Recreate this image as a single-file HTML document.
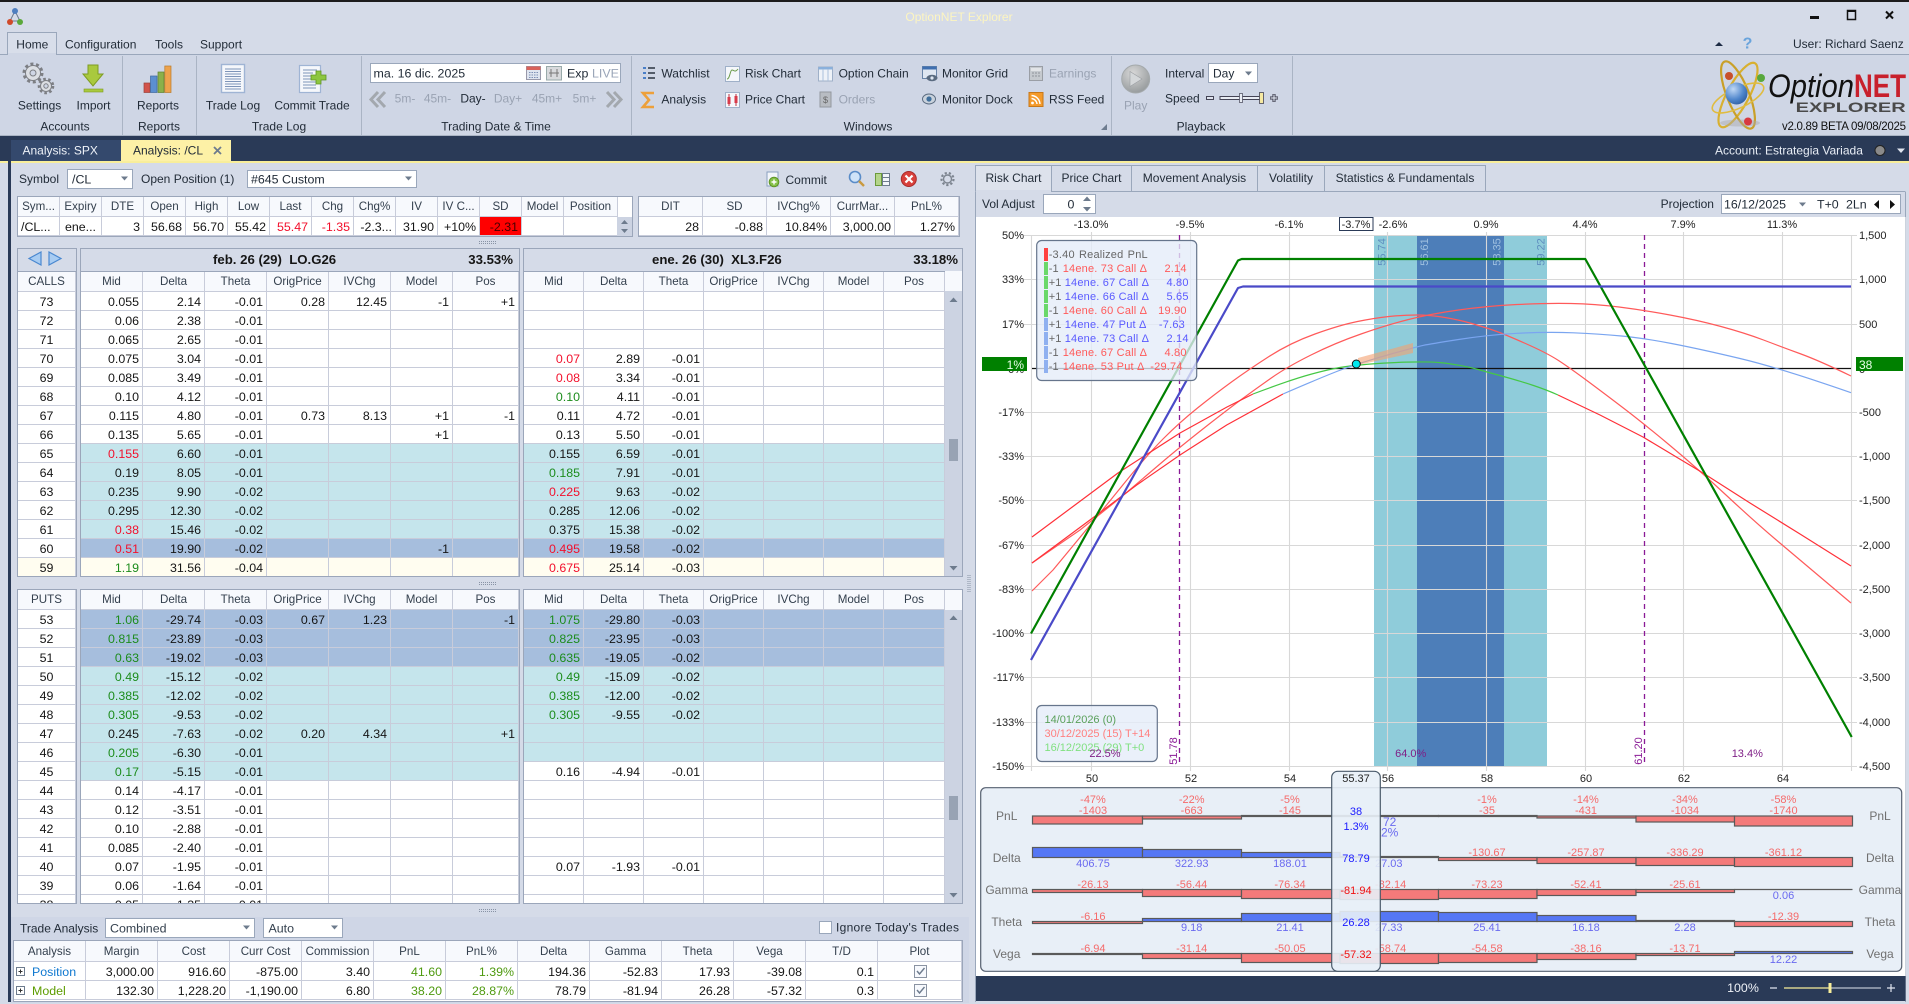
<!DOCTYPE html>
<html><head><meta charset="utf-8"><title>OptionNET Explorer</title>
<style>
html,body{margin:0;padding:0;width:1909px;height:1004px;overflow:hidden;background:#d5dbe8;font-family:"Liberation Sans",sans-serif}
body{filter:blur(.3px)}
div.p{position:absolute}
.t{position:absolute;box-sizing:border-box;border:1px solid #9ba6ba;overflow:hidden;background:#fff}
table{border-collapse:separate;border-spacing:0;table-layout:fixed}
td,th{box-sizing:border-box;height:19px;padding:1px 3px 0 0;border-right:1px solid #c8ccda;border-bottom:1px solid #c8ccda;font:12.4px "Liberation Sans",sans-serif;color:#151515;text-align:right;white-space:nowrap;overflow:hidden}
th{font-weight:normal;font-size:11.6px;text-align:center;background:#f7f9fd;height:20px;color:#34404e;padding:0}
td.s{text-align:center;padding:1px 0 0 0}
td.r{color:#f2102c}td.g{color:#1c8c1c}td.o{color:#4f9a10}
tr.a td{background:#c5e5ec}tr.b td{background:#a6bedd}tr.c td{background:#fffdf0}
.ti{height:22px;background:#d5dbe8;border-bottom:1px solid #9ba6ba;position:relative}
svg{position:absolute;left:0;top:0}
svg text{font-family:"Liberation Sans",sans-serif;font-size:12px;fill:#222c38;dominant-baseline:central}
.m{text-anchor:middle}.e{text-anchor:end}
.d{fill:#9aa3b3}
.c{font-size:11px;fill:#222}
.lr{font-size:11px;fill:#f56a6a}.lb{font-size:11px;fill:#6a6af0}
svg text.lg{font-size:11px;letter-spacing:.2px}
svg text.l2{font-size:11px}
.pl{font-size:12px;fill:#707070}
</style></head><body>
<div class="p" style="left:0;top:0;width:1909px;height:2px;background:#1c1c1c"></div>
<div class="p" style="left:0;top:54px;width:1909px;height:82px;background:#cfd6e5"></div>
<div class="p" style="left:0;top:135px;width:1909px;height:27px;background:#2a3a57"></div>
<div class="p" style="left:0;top:161px;width:1909px;height:2px;background:#f8ee9a"></div>
<div class="p" style="left:8px;top:136px;width:3px;height:866px;background:#2a3a57"></div>
<div class="p" style="left:11px;top:163px;width:964px;height:840px;background:#d5dbe8"></div>
<div class="p" style="left:11px;top:917px;width:958px;height:86px;background:#cfd6e6"></div>
<div class="p" style="left:120px;top:140px;width:111px;height:21px;background:#fdf1a6"></div>
<div class="p" style="left:11px;top:140px;width:110px;height:21px;background:#34496d"></div>

<!-- Info tables -->
<div class="t" style="left:17px;top:196px;width:616px;height:41px">
<table style="width:600px"><colgroup><col span="13" style="width:42px"><col style="width:54px"></colgroup>
<tr><th>Sym...<th>Expiry<th>DTE<th>Open<th>High<th>Low<th>Last<th>Chg<th>Chg%<th>IV<th>IV C...<th>SD<th>Model<th>Position</tr>
<tr><td style="text-align:left;padding-left:3px">/CL...<td class="s">ene...<td>3<td>56.68<td>56.70<td>55.42<td class="r">55.47<td class="r">-1.35<td>-2.3...<td>31.90<td>+10%<td style="background:#f00;color:#400">-2.31<td><td></tr>
</table></div>
<div class="t" style="left:638px;top:196px;width:322px;height:41px">
<table style="width:320px"><colgroup><col span="5" style="width:64px"></colgroup>
<tr><th>DIT<th>SD<th>IVChg%<th>CurrMar...<th>PnL%</tr>
<tr><td>28<td>-0.88<td>10.84%<td>3,000.00<td>1.27%</tr>
</table></div>

<!-- Calls strikes -->
<div class="t" style="left:17px;top:248px;width:60px;height:329px">
<div class="ti"></div>
<table style="width:58px"><col style="width:58px">
<tr><th>CALLS</tr>
<tr><td class="s">73<tr><td class="s">72<tr><td class="s">71<tr><td class="s">70<tr><td class="s">69<tr><td class="s">68<tr><td class="s">67<tr><td class="s">66<tr><td class="s">65<tr><td class="s">64<tr><td class="s">63<tr><td class="s">62<tr><td class="s">61<tr><td class="s">60<tr class="c"><td class="s">59
</table></div>

<!-- Calls left -->
<div class="t" style="left:80px;top:248px;width:440px;height:329px">
<div class="ti" style="font:bold 13.2px 'Liberation Sans',sans-serif;line-height:21px;color:#151515"><span style="position:absolute;left:132px;white-space:pre">feb. 26 (29)  LO.G26</span><span style="position:absolute;right:6px">33.53%</span></div>
<table style="width:438px"><colgroup><col span="6" style="width:62px"><col style="width:66px"></colgroup>
<tr><th>Mid<th>Delta<th>Theta<th>OrigPrice<th>IVChg<th>Model<th>Pos</tr>
<tr><td>0.055<td>2.14<td>-0.01<td>0.28<td>12.45<td>-1<td>+1</tr>
<tr><td>0.06<td>2.38<td>-0.01<td><td><td><td></tr>
<tr><td>0.065<td>2.65<td>-0.01<td><td><td><td></tr>
<tr><td>0.075<td>3.04<td>-0.01<td><td><td><td></tr>
<tr><td>0.085<td>3.49<td>-0.01<td><td><td><td></tr>
<tr><td>0.10<td>4.12<td>-0.01<td><td><td><td></tr>
<tr><td>0.115<td>4.80<td>-0.01<td>0.73<td>8.13<td>+1<td>-1</tr>
<tr><td>0.135<td>5.65<td>-0.01<td><td><td>+1<td></tr>
<tr class="a"><td class="r">0.155<td>6.60<td>-0.01<td><td><td><td></tr>
<tr class="a"><td>0.19<td>8.05<td>-0.01<td><td><td><td></tr>
<tr class="a"><td>0.235<td>9.90<td>-0.02<td><td><td><td></tr>
<tr class="a"><td>0.295<td>12.30<td>-0.02<td><td><td><td></tr>
<tr class="a"><td class="r">0.38<td>15.46<td>-0.02<td><td><td><td></tr>
<tr class="b"><td class="r">0.51<td>19.90<td>-0.02<td><td><td>-1<td></tr>
<tr class="c"><td class="g">1.19<td>31.56<td>-0.04<td><td><td><td></tr>
</table></div>

<!-- Calls right -->
<div class="t" style="left:523px;top:248px;width:440px;height:329px;background:#ccd3e2">
<div class="ti" style="font:bold 13.2px 'Liberation Sans',sans-serif;line-height:21px;color:#151515"><span style="position:absolute;left:128px;white-space:pre">ene. 26 (30)  XL3.F26</span><span style="position:absolute;right:4px">33.18%</span></div>
<table style="width:421px;background:#fff"><colgroup><col span="6" style="width:60px"><col style="width:61px"></colgroup>
<tr><th>Mid<th>Delta<th>Theta<th>OrigPrice<th>IVChg<th>Model<th>Pos</tr>
<tr><td><td><td><td><td><td><td></tr>
<tr><td><td><td><td><td><td><td></tr>
<tr><td><td><td><td><td><td><td></tr>
<tr><td class="r">0.07<td>2.89<td>-0.01<td><td><td><td></tr>
<tr><td class="r">0.08<td>3.34<td>-0.01<td><td><td><td></tr>
<tr><td class="g">0.10<td>4.11<td>-0.01<td><td><td><td></tr>
<tr><td>0.11<td>4.72<td>-0.01<td><td><td><td></tr>
<tr><td>0.13<td>5.50<td>-0.01<td><td><td><td></tr>
<tr class="a"><td>0.155<td>6.59<td>-0.01<td><td><td><td></tr>
<tr class="a"><td class="g">0.185<td>7.91<td>-0.01<td><td><td><td></tr>
<tr class="a"><td class="r">0.225<td>9.63<td>-0.02<td><td><td><td></tr>
<tr class="a"><td>0.285<td>12.06<td>-0.02<td><td><td><td></tr>
<tr class="a"><td>0.375<td>15.38<td>-0.02<td><td><td><td></tr>
<tr class="b"><td class="r">0.495<td>19.58<td>-0.02<td><td><td><td></tr>
<tr class="c"><td class="r">0.675<td>25.14<td>-0.03<td><td><td><td></tr>
</table>
</div>
<div class="p" style="left:945px;top:271px;width:17px;height:20px;background:#f7f9fd"></div>

<!-- Puts strikes -->
<div class="t" style="left:17px;top:589px;width:60px;height:315px">
<table style="width:58px"><col style="width:58px">
<tr><th>PUTS</tr>
<tr><td class="s">53<tr><td class="s">52<tr><td class="s">51<tr><td class="s">50<tr><td class="s">49<tr><td class="s">48<tr><td class="s">47<tr><td class="s">46<tr><td class="s">45<tr><td class="s">44<tr><td class="s">43<tr><td class="s">42<tr><td class="s">41<tr><td class="s">40<tr><td class="s">39<tr><td class="s">38
</table></div>

<!-- Puts left -->
<div class="t" style="left:80px;top:589px;width:440px;height:315px">
<table style="width:438px"><colgroup><col span="6" style="width:62px"><col style="width:66px"></colgroup>
<tr><th>Mid<th>Delta<th>Theta<th>OrigPrice<th>IVChg<th>Model<th>Pos</tr>
<tr class="b"><td class="g">1.06<td>-29.74<td>-0.03<td>0.67<td>1.23<td><td>-1</tr>
<tr class="b"><td class="g">0.815<td>-23.89<td>-0.03<td><td><td><td></tr>
<tr class="b"><td class="g">0.63<td>-19.02<td>-0.03<td><td><td><td></tr>
<tr class="a"><td class="g">0.49<td>-15.12<td>-0.02<td><td><td><td></tr>
<tr class="a"><td class="g">0.385<td>-12.02<td>-0.02<td><td><td><td></tr>
<tr class="a"><td class="g">0.305<td>-9.53<td>-0.02<td><td><td><td></tr>
<tr class="a"><td>0.245<td>-7.63<td>-0.02<td>0.20<td>4.34<td><td>+1</tr>
<tr class="a"><td class="g">0.205<td>-6.30<td>-0.01<td><td><td><td></tr>
<tr class="a"><td class="g">0.17<td>-5.15<td>-0.01<td><td><td><td></tr>
<tr><td>0.14<td>-4.17<td>-0.01<td><td><td><td></tr>
<tr><td>0.12<td>-3.51<td>-0.01<td><td><td><td></tr>
<tr><td>0.10<td>-2.88<td>-0.01<td><td><td><td></tr>
<tr><td>0.085<td>-2.40<td>-0.01<td><td><td><td></tr>
<tr><td>0.07<td>-1.95<td>-0.01<td><td><td><td></tr>
<tr><td>0.06<td>-1.64<td>-0.01<td><td><td><td></tr>
<tr><td>0.05<td>-1.35<td>-0.01<td><td><td><td></tr>
</table></div>

<!-- Puts right -->
<div class="t" style="left:523px;top:589px;width:440px;height:315px;background:#ccd3e2">
<table style="width:421px;background:#fff"><colgroup><col span="6" style="width:60px"><col style="width:61px"></colgroup>
<tr><th>Mid<th>Delta<th>Theta<th>OrigPrice<th>IVChg<th>Model<th>Pos</tr>
<tr class="b"><td class="g">1.075<td>-29.80<td>-0.03<td><td><td><td></tr>
<tr class="b"><td class="g">0.825<td>-23.95<td>-0.03<td><td><td><td></tr>
<tr class="b"><td class="g">0.635<td>-19.05<td>-0.02<td><td><td><td></tr>
<tr class="a"><td class="g">0.49<td>-15.09<td>-0.02<td><td><td><td></tr>
<tr class="a"><td class="g">0.385<td>-12.00<td>-0.02<td><td><td><td></tr>
<tr class="a"><td class="g">0.305<td>-9.55<td>-0.02<td><td><td><td></tr>
<tr class="a"><td><td><td><td><td><td><td></tr>
<tr class="a"><td><td><td><td><td><td><td></tr>
<tr><td>0.16<td>-4.94<td>-0.01<td><td><td><td></tr>
<tr><td><td><td><td><td><td><td></tr>
<tr><td><td><td><td><td><td><td></tr>
<tr><td><td><td><td><td><td><td></tr>
<tr><td><td><td><td><td><td><td></tr>
<tr><td>0.07<td>-1.93<td>-0.01<td><td><td><td></tr>
<tr><td><td><td><td><td><td><td></tr>
<tr><td><td><td><td><td><td><td></tr>
</table></div>
<div class="p" style="left:945px;top:590px;width:17px;height:20px;background:#f7f9fd"></div>

<!-- Trade analysis table -->
<div class="t" style="left:13px;top:940px;width:950px;height:62px">
<table style="width:948px"><colgroup><col span="12" style="width:72px"><col style="width:84px"></colgroup>
<tr><th style="height:21px">Analysis<th style="height:21px">Margin<th style="height:21px">Cost<th style="height:21px">Curr Cost<th style="height:21px">Commission<th style="height:21px">PnL<th style="height:21px">PnL%<th style="height:21px">Delta<th style="height:21px">Gamma<th style="height:21px">Theta<th style="height:21px">Vega<th style="height:21px">T/D<th style="height:21px">Plot</tr>
<tr><td style="text-align:left;padding-left:18px;color:#0f78d0">Position<td>3,000.00<td>916.60<td>-875.00<td>3.40<td class="o">41.60<td class="o">1.39%<td>194.36<td>-52.83<td>17.93<td>-39.08<td>0.1<td></tr>
<tr><td style="text-align:left;padding-left:18px;color:#5d9c00">Model<td>132.30<td>1,228.20<td>-1,190.00<td>6.80<td class="o">38.20<td class="o">28.87%<td>78.79<td>-81.94<td>26.28<td>-57.32<td>0.3<td></tr>
</table></div>

<svg width="1909" height="1004" viewBox="0 0 1909 1004" xmlns="http://www.w3.org/2000/svg">
<defs>
<radialGradient id="sp" cx=".35" cy=".3" r=".8"><stop offset="0" stop-color="#c0d8f5"/><stop offset=".6" stop-color="#4f86cc"/><stop offset="1" stop-color="#2c5a9c"/></radialGradient>
<radialGradient id="pl" cx=".4" cy=".3" r=".8"><stop offset="0" stop-color="#d8d8d8"/><stop offset="1" stop-color="#8f9496"/></radialGradient>
</defs>
<!-- title bar -->
<g stroke="#6d7b8d" stroke-width="1" fill="none"><path d="M15 11 10 21 20 21Z"/></g>
<circle cx="15" cy="11" r="3" fill="#4f7fc0"/><circle cx="10" cy="22" r="3" fill="#d04a2a"/><circle cx="20" cy="22" r="3" fill="#5aa83a"/>
<text x="959" y="17" class="m" style="fill:#fdf5c0">OptionNET Explorer</text>
<rect x="1810" y="16" width="9" height="3" fill="#111"/>
<rect x="1847.5" y="10.5" width="8" height="9" fill="none" stroke="#111" stroke-width="1.5"/><path d="M1847 11h9" stroke="#111" stroke-width="2"/>
<path d="M1886 11.5l7 7M1893 11.5l-7 7" stroke="#111" stroke-width="2"/>
<path d="M1715 46l4-4 4 4z" fill="#1d2b44"/>
<text x="1747.5" y="44" class="m" style="font-size:16px;font-weight:bold;fill:#6aa4dc">?</text>
<text x="1793" y="44">User: Richard Saenz</text>

<!-- ribbon tabs -->
<path d="M0 54.5H1909" stroke="#9aa7bb"/>
<path d="M7.5 54.5V32.5H56.5V54.5" fill="#d8deea" stroke="#9aa7bb"/>
<rect x="8" y="53" width="48" height="3" fill="#cfd6e5"/>
<text x="16.3" y="44.5">Home</text><text x="65" y="44.5">Configuration</text><text x="155" y="44.5">Tools</text><text x="200" y="44.5">Support</text>
<path d="M122.5 56V135M196.5 56V135M361.5 56V135M631.5 56V135M1111.5 56V135M1292.5 56V135" stroke="#aab4c4"/>
<path d="M0 135.5H1909" stroke="#aab4c4"/>
<g class="m"><text x="65" y="126.5" class="m">Accounts</text><text x="159" y="126.5" class="m">Reports</text><text x="279" y="126.5" class="m">Trade Log</text><text x="496" y="126.5" class="m">Trading Date &amp; Time</text><text x="868" y="126.5" class="m">Windows</text><text x="1201" y="126.5" class="m">Playback</text>
<text x="39.6" y="105.5" class="m">Settings</text><text x="93.5" y="105.5" class="m">Import</text><text x="158" y="105.5" class="m">Reports</text><text x="233" y="105.5" class="m">Trade Log</text><text x="312" y="105.5" class="m">Commit Trade</text></g>

<!-- gears -->
<g fill="#dcdfe4" stroke="#7d7f84"><circle cx="33" cy="73" r="7.5"/><circle cx="33" cy="73" r="3" fill="#cfd6e5"/><circle cx="33" cy="73" r="9" fill="none" stroke-width="3" stroke-dasharray="3 2.65"/>
<circle cx="46" cy="86" r="5.5"/><circle cx="46" cy="86" r="2.2" fill="#cfd6e5"/><circle cx="46" cy="86" r="7" fill="none" stroke-width="2.6" stroke-dasharray="2.6 2.4"/></g>
<!-- import -->
<path d="M88 65H98V74H103L93 86 83 74H88Z" fill="#a9c93e" stroke="#7e9c22"/><rect x="84" y="89" width="19" height="3" fill="#a9c93e" stroke="#7e9c22" stroke-width=".6"/>
<!-- reports -->
<rect x="144" y="83" width="6" height="9.5" fill="#d2534a" stroke="#99413a" stroke-width=".7"/><rect x="150.5" y="76" width="6.5" height="16.5" fill="#5c8fd0" stroke="#3f689e" stroke-width=".7"/><rect x="158" y="72" width="6" height="20.5" fill="#8bb04a" stroke="#5f8230" stroke-width=".7"/><rect x="164.8" y="66" width="6.2" height="26.5" fill="#eda24c" stroke="#b97a2a" stroke-width=".7"/>
<!-- trade log -->
<rect x="221.5" y="64.5" width="23" height="28" fill="#f5f7fb" stroke="#9fb4d4" stroke-width="1.4"/><path d="M225 69H241M225 71.5H241M225 74H241M225 76.5H241M225 79H241M225 81.5H241M225 84H241M225 86.5H241M225 89H241" stroke="#7d94b8"/>
<!-- commit trade -->
<rect x="299.5" y="65.5" width="21" height="27" fill="#f5f7fb" stroke="#9fb4d4" stroke-width="1.2"/><path d="M303 70H317M303 73H313M303 76H311M303 79H311M303 82H316M303 85H316M303 88H316" stroke="#7d94b8"/>
<path d="M316 71H321V75H326V80H321V84H316V80H311V75H316Z" fill="#8dc63f" stroke="#5f9422" stroke-width=".8"/>
<!-- date -->
<rect x="370.5" y="63.5" width="250" height="19" fill="#fff" stroke="#9aa7bb"/>
<text x="373.5" y="73.5" style="font-size:12.4px">ma. 16 dic. 2025</text>
<rect x="526.5" y="66.5" width="14" height="13" fill="#dfe5f0" stroke="#99a"/><rect x="526.5" y="66.5" width="14" height="3.5" fill="#d9625a"/><path d="M529 72.5h9M529 75h9M529 77.5h9" stroke="#7c8fb5" stroke-dasharray="1.5 1"/>
<rect x="546.5" y="66.5" width="15" height="13.5" fill="#d8dadd" stroke="#9aa"/><path d="M551 69v8M557 69v8M549 73h10" stroke="#777"/>
<text x="567" y="73.5" style="font-size:12.4px">Exp</text><text x="592" y="73.5" style="font-size:12.4px;fill:#9aa5b8">LIVE</text>
<path d="M378 92l-7 7.5 7 7.5M385 92l-7 7.5 7 7.5" fill="none" stroke="#a3a8ae" stroke-width="3"/>
<path d="M607 92l7 7.5-7 7.5M614 92l7 7.5-7 7.5" fill="none" stroke="#a3a8ae" stroke-width="3"/>
<text x="405" y="98.5" class="m d">5m-</text><text x="437.5" y="98.5" class="m d">45m-</text><text x="473" y="98.5" class="m">Day-</text><text x="508" y="98.5" class="m d">Day+</text><text x="547" y="98.5" class="m d">45m+</text><text x="584.5" y="98.5" class="m d">5m+</text>

<!-- window items -->
<text x="661.4" y="73.5">Watchlist</text><text x="661.4" y="99.5">Analysis</text><text x="745" y="73.5">Risk Chart</text><text x="745" y="99.5">Price Chart</text><text x="838.6" y="73.5">Option Chain</text><text x="838.6" y="99.5" class="d">Orders</text><text x="942" y="73.5">Monitor Grid</text><text x="942" y="99.5">Monitor Dock</text><text x="1049" y="73.5" class="d">Earnings</text><text x="1049" y="99.5">RSS Feed</text>
<!-- watchlist icon -->
<path d="M643 68h3M643 73h3M643 78h3" stroke="#4a7fc8" stroke-width="2"/><path d="M648 68h7M648 73h7M648 78h7" stroke="#2a3440" stroke-width="1.5"/>
<!-- analysis sigma -->
<path d="M654 93H643L649 100 643 107H654" fill="none" stroke="#eda03a" stroke-width="2.6"/>
<!-- risk chart -->
<rect x="725.5" y="66.5" width="14" height="15" fill="#f5f7fb" stroke="#9fb0c8"/><path d="M727 79c3 0 3-9 5-9s3 3 6-1" fill="none" stroke="#6a9a4a"/>
<!-- price chart -->
<rect x="725.5" y="92.5" width="14" height="15" fill="#f5f7fb" stroke="#9fb0c8"/><path d="M729 94v12M736 94v12" stroke="#c03040"/><rect x="727.5" y="97" width="3" height="7" fill="#d83a4a"/><rect x="734.5" y="96" width="3" height="7" fill="#d83a4a"/>
<!-- option chain -->
<rect x="818.5" y="67" width="14" height="14" fill="#eef2f8" stroke="#9fb0c8"/><rect x="818.5" y="67" width="14" height="2.5" fill="#8ab0dc"/><path d="M823 69v12M828 69v12" stroke="#a9c0dc"/>
<!-- orders -->
<rect x="820" y="92" width="11" height="15" fill="#b8bcc2" stroke="#93989e"/><text x="825.5" y="100" class="m" style="font-size:9px;fill:#666">$</text>
<!-- monitor grid -->
<rect x="922.5" y="66.5" width="14" height="12" fill="#dfe7f2" stroke="#6a85a8"/><rect x="922.5" y="66.5" width="14" height="3" fill="#3f6fb0"/><ellipse cx="932" cy="78" rx="5.5" ry="3.2" fill="#5a6b80"/><circle cx="932" cy="78" r="1.6" fill="#dfe7f2"/>
<!-- monitor dock -->
<ellipse cx="929" cy="99" rx="6.5" ry="5" fill="#c9d2dc" stroke="#5a6b80"/><circle cx="929" cy="99" r="2.6" fill="#3f6f9c"/>
<!-- earnings -->
<rect x="1029.5" y="66.5" width="13" height="14" fill="#c5c9ce" stroke="#9a9ea5"/><rect x="1031" y="68" width="10" height="3" fill="#e2e4e7"/><path d="M1032 73h8M1032 76h8" stroke="#8f9399" stroke-dasharray="2 1"/>
<!-- rss -->
<rect x="1029" y="92.5" width="14" height="14" fill="#f49a2a" stroke="#c87818"/><circle cx="1032.5" cy="103" r="1.4" fill="#fff"/><path d="M1031.5 98.5a6 6 0 0 1 5.5 5.5M1031.5 95.5a9 9 0 0 1 8.5 8.5" fill="none" stroke="#fff" stroke-width="1.4"/>
<path d="M1107 124v6h-6z" fill="#6e7c8f"/>
<!-- play -->
<circle cx="1135.7" cy="79" r="14" fill="url(#pl)" stroke="#a4a9ab"/><path d="M1130 71.5l12 7.5-12 7.5z" fill="#d4d7d9" stroke="#9a9ea2" stroke-width=".6"/>
<text x="1135.7" y="105.5" class="m d">Play</text>
<text x="1165" y="73.5">Interval</text>
<rect x="1208.5" y="63.5" width="49" height="19" fill="#fff" stroke="#9aa7bb"/><text x="1213" y="73.5">Day</text><path d="M1245 71.5h7l-3.5 4z" fill="#6d7b8d"/>
<text x="1165" y="98.5">Speed</text>
<rect x="1206.5" y="96.5" width="7" height="3" fill="#dfe4ee" stroke="#445"/>
<rect x="1220" y="96.5" width="42" height="3" fill="#e8ecf3" stroke="#445"/><rect x="1239.5" y="93.5" width="3" height="9" fill="#e8ecf3" stroke="#445" stroke-width=".7"/><rect x="1259.5" y="92.5" width="4" height="11" fill="#f6e9a2" stroke="#445" stroke-width=".8"/>
<path d="M1270 98h8M1274 94v8" stroke="#334" stroke-width="3"/><path d="M1270.500 98h7M1274 94.500v7" stroke="#dde3ee" stroke-width="1.200"/>
<!-- logo -->
<ellipse cx="1738" cy="95" rx="36" ry="11" fill="none" stroke="#d8b030" stroke-width="2.2" transform="rotate(-62 1738 95)"/>
<ellipse cx="1738" cy="95" rx="36" ry="11" fill="none" stroke="#c9a028" stroke-width="2.2" transform="rotate(68 1738 95)"/>
<ellipse cx="1738" cy="98" rx="28" ry="10" fill="none" stroke="#e0bc40" stroke-width="1.6" transform="rotate(-25 1738 98)"/>
<ellipse cx="1740" cy="123" rx="20" ry="3.5" fill="#a8a8a8" opacity=".45"/>
<circle cx="1736.5" cy="93.5" r="11" fill="url(#sp)"/><circle cx="1729" cy="76" r="4" fill="#c8502c"/><circle cx="1761" cy="78" r="4" fill="#58a83c"/><circle cx="1748" cy="121.5" r="4" fill="#d83a40"/>
<text x="1768" y="86" textLength="86" lengthAdjust="spacingAndGlyphs" style="font-size:32px;font-style:italic;fill:#111">Option</text>
<text x="1854" y="86" textLength="52" lengthAdjust="spacingAndGlyphs" style="font-size:32px;font-weight:bold;fill:#c8202c">NET</text>
<text x="1795.7" y="107" textLength="110" lengthAdjust="spacingAndGlyphs" style="font-size:14px;fill:#4a4a4a;font-weight:bold">EXPLORER</text>
<text x="1782" y="127" textLength="124" style="font-size:11.5px;fill:#111">v2.0.89 BETA 09/08/2025</text>

<!-- doc tabs -->
<text x="22.5" y="150.5" style="fill:#eef2f8">Analysis: SPX</text>
<text x="133" y="150.5">Analysis: /CL</text>
<path d="M214 147l7 7M221 147l-7 7" stroke="#6d7b8d" stroke-width="1.8"/>
<text x="1715" y="150.5" style="fill:#e8edf5">Account: Estrategia Variada</text>
<circle cx="1880" cy="150.5" r="5" fill="#8a8a8a" stroke="#222"/>
<path d="M1897 148.5h8l-4 4.5z" fill="#dfe4ee"/>

<!-- symbol row -->
<text x="19" y="179">Symbol</text>
<rect x="67.5" y="169.5" width="65" height="19" fill="#fff" stroke="#9aa7bb"/><text x="72" y="179.5" style="font-size:12.4px">/CL</text><path d="M121 176.5h7l-3.5 4z" fill="#6d7b8d"/>
<text x="141" y="179">Open Position (1)</text>
<rect x="247.5" y="170.5" width="169" height="17" fill="#fff" stroke="#9aa7bb"/><text x="251" y="179.5" style="font-size:12.4px">#645 Custom</text><path d="M405 176.5h7l-3.5 4z" fill="#6d7b8d"/>
<rect x="767" y="172" width="11" height="14" fill="#f2f5fa" stroke="#8aa0c0"/><circle cx="774" cy="182" r="4.8" fill="#86c24a" stroke="#5f9428"/><path d="M771.5 182h5M774 179.5v5" stroke="#fff" stroke-width="1.4"/>
<text x="785.5" y="180">Commit</text>
<circle cx="855" cy="177" r="5.5" fill="#cfe3f8" stroke="#5a8cc8" stroke-width="1.6"/><path d="M859 181l5 5" stroke="#c99a40" stroke-width="2.4"/>
<rect x="875.5" y="173.5" width="6" height="12" fill="#b4d48a" stroke="#6b9a3a"/><rect x="882.5" y="173.5" width="7" height="12" fill="#f2f5fa" stroke="#6d7b8d"/><path d="M883 177.5h6M883 181.5h6" stroke="#6d7b8d"/>
<circle cx="908.8" cy="179" r="7.5" fill="#d8413c" stroke="#a82a2a"/><path d="M905.5 175.5l7 7M912.5 175.5l-7 7" stroke="#fff" stroke-width="2.2"/>
<circle cx="947.5" cy="179" r="4" fill="#d5dbe8" stroke="#7d8590" stroke-width="1.4"/><circle cx="947.5" cy="179" r="6" fill="none" stroke="#7d8590" stroke-width="2.2" stroke-dasharray="2.2 2"/>
<!-- info scroll -->
<rect x="617" y="217" width="15" height="19" fill="#ccd3e2"/><path d="M621 224l3.5-4 3.5 4zM621 229l3.5 4 3.5-4z" fill="#6d7b8d"/>
<!-- calls nav arrows -->
<path d="M41 252v13l-12-6.500z" fill="#a8ccf2" stroke="#4a88d0" stroke-width="1.2"/><path d="M49 252v13l12-6.500z" fill="#a8ccf2" stroke="#4a88d0" stroke-width="1.2"/>
<!-- scrollbars -->
<rect x="945" y="291" width="17" height="285" fill="#ccd3e2"/><path d="M949.500 302l4-4.500 4 4.500zM949.500 566l4 4.500 4-4.500z" fill="#6d7b8d"/><rect x="949" y="439" width="9" height="22" fill="#98a3b4"/>
<rect x="945" y="610" width="17" height="293" fill="#ccd3e2"/><path d="M949.500 620l4-4.500 4 4.500zM949.500 893l4 4.500 4-4.500z" fill="#6d7b8d"/><rect x="949" y="796" width="9" height="24" fill="#98a3b4"/>
<!-- splitters -->
<g fill="none" stroke="#8893a5" stroke-dasharray="1 1"><path d="M479 241.500h17M479 243.500h17M479 582.500h17M479 584.500h17M479 909.500h17M479 911.500h17M968 575v17M970 575v17"/></g>
<!-- trade analysis -->
<text x="20" y="928.500">Trade Analysis</text>
<rect x="105.500" y="918.500" width="149" height="19" fill="#fff" stroke="#9aa7bb"/><text x="110" y="928.500" style="font-size:12.4px;fill:#34404e">Combined</text><path d="M243 925.500h7l-3.500 4z" fill="#6d7b8d"/>
<rect x="263.500" y="918.500" width="79" height="19" fill="#fff" stroke="#9aa7bb"/><text x="268.500" y="928.500" style="font-size:12.4px;fill:#34404e">Auto</text><path d="M331 925.500h7l-3.500 4z" fill="#6d7b8d"/>
<rect x="819.500" y="921.500" width="12" height="12" fill="#fff" stroke="#9aa7bb"/><text x="836" y="927.500" textLength="123">Ignore Today's Trades</text>
<g fill="#fff" stroke="#6d7b8d"><rect x="16.500" y="967.500" width="8" height="8"/><rect x="16.500" y="986.500" width="8" height="8"/></g>
<path d="M18.500 971.500h4M20.500 969.500v4M18.500 990.500h4M20.500 988.500v4" stroke="#333"/>
<g fill="#f7f9fd" stroke="#8a93a2"><rect x="914.500" y="965.500" width="12" height="12"/><rect x="914.500" y="984.500" width="12" height="12"/></g>
<path d="M917 971l2.500 3 5-6M917 990l2.500 3 5-6" fill="none" stroke="#6d7b8d" stroke-width="1.4"/>

<!-- right panel -->
<rect x="975.500" y="191.500" width="930" height="25.500" fill="#d5dbe8"/>
<path d="M975.500 191.500H1905.500" stroke="#9aa7bb"/>
<path d="M975.500 192V1002M1905.500 192V1002" stroke="#9aa7bb"/>
<path d="M975.500 191.500V165.500H1051.500V191.500" fill="#dde2ec" stroke="#9aa7bb"/><rect x="976" y="190" width="75" height="3" fill="#d5dbe8"/>
<path d="M1051.500 191.500V165.500H1131.500V191.500M1131.500 191.500V165.500H1257.500V191.500M1257.500 191.500V165.500H1324.500V191.500M1324.500 191.500V165.500H1485.500V191.500" fill="none" stroke="#9aa7bb"/>
<text x="1013.500" y="178" class="m">Risk Chart</text><text x="1091.500" y="178" class="m">Price Chart</text><text x="1194.500" y="178" class="m">Movement Analysis</text><text x="1291" y="178" class="m">Volatility</text><text x="1405" y="178" class="m">Statistics &amp; Fundamentals</text>
<text x="982" y="204">Vol Adjust</text>
<rect x="1043.500" y="194.500" width="52" height="19" fill="#fff" stroke="#9aa7bb"/><text x="1071" y="204.500" class="m" style="font-size:12.4px">0</text><path d="M1083 201l4-4.500 4 4.500zM1083 207l4 4.500 4-4.500z" fill="#6d7b8d"/>
<text x="1660.600" y="204">Projection</text>
<rect x="1721.500" y="194.500" width="179" height="19" fill="#fff" stroke="#9aa7bb"/><text x="1724" y="204.500" style="font-size:12.4px">16/12/2025</text><path d="M1799 202.500h7l-3.500 4z" fill="#6d7b8d"/><text x="1817" y="204.500" style="font-size:12.4px">T+0</text><text x="1846" y="204.500" style="font-size:12.4px">2Ln</text><path d="M1879 200v9l-5-4.500zM1890 200v9l5-4.500z" fill="#111"/>

<rect x="976" y="217" width="929.500" height="759" fill="#fff"/>
<!-- bands -->
<rect x="1374" y="235.500" width="173" height="530.500" fill="#8fccda"/><rect x="1417" y="235.500" width="87" height="530.500" fill="#4d7eb9"/>
<!-- grid -->
<g stroke="#d8d8d8" stroke-width="1.1">
<path d="M1024 235.500H1857M1024 279.500H1857M1024 324.500H1857M1024 412.500H1857M1024 456.500H1857M1024 500.500H1857M1024 545.500H1857M1024 589.500H1857M1024 633.500H1857M1024 677.500H1857M1024 722.500H1857M1024 766.500H1857"/>
<path d="M1031.500 235V771M1091.500 232V771M1190.500 232V771M1289.500 232V771M1387.500 232V771M1486.500 232V771M1585.500 232V771M1683.500 232V771M1782.500 232V771M1851.500 235V771"/></g>
<!-- top pct -->
<g class="c"><text class="c m" x="1091" y="225">-13.0%</text><text class="c m" x="1190" y="225">-9.5%</text><text class="c m" x="1289" y="225">-6.1%</text><text class="c m" x="1387" y="225" dx="6">-2.6%</text><text class="c m" x="1486" y="225">0.9%</text><text class="c m" x="1585" y="225">4.4%</text><text class="c m" x="1683" y="225">7.9%</text><text class="c m" x="1782" y="225">11.3%</text></g>
<rect x="1339.500" y="217.500" width="33.500" height="13" fill="#fff" stroke="#2a3a57"/><text class="c m" x="1356" y="225">-3.7%</text>
<!-- left y labels -->
<g><text class="c e" x="1024" y="236">50%</text><text class="c e" x="1024" y="280">33%</text><text class="c e" x="1024" y="325">17%</text><text class="c e" x="1024" y="370">0%</text><text class="c e" x="1024" y="413">-17%</text><text class="c e" x="1024" y="457">-33%</text><text class="c e" x="1024" y="501">-50%</text><text class="c e" x="1024" y="546">-67%</text><text class="c e" x="1024" y="590">-83%</text><text class="c e" x="1024" y="634">-100%</text><text class="c e" x="1024" y="678">-117%</text><text class="c e" x="1024" y="723">-133%</text><text class="c e" x="1024" y="767">-150%</text></g>
<g><text class="c" x="1859" y="236">1,500</text><text class="c" x="1859" y="280">1,000</text><text class="c" x="1859" y="325">500</text><text class="c" x="1859" y="370">0</text><text class="c" x="1859" y="413">-500</text><text class="c" x="1859" y="457">-1,000</text><text class="c" x="1859" y="501">-1,500</text><text class="c" x="1859" y="546">-2,000</text><text class="c" x="1859" y="590">-2,500</text><text class="c" x="1859" y="634">-3,000</text><text class="c" x="1859" y="678">-3,500</text><text class="c" x="1859" y="723">-4,000</text><text class="c" x="1859" y="767">-4,500</text></g>
<!-- x labels -->
<g><text class="c m" x="1092" y="779">50</text><text class="c m" x="1191" y="779">52</text><text class="c m" x="1290" y="779">54</text><text class="c m" x="1388" y="779">56</text><text class="c m" x="1487" y="779">58</text><text class="c m" x="1586" y="779">60</text><text class="c m" x="1684" y="779">62</text><text class="c m" x="1783" y="779">64</text></g>
<!-- rotated band labels -->
<text x="1382.300" y="252" class="m" transform="rotate(-90 1382.300 252)" style="font-size:11px;fill:#5f8fc0">55.74</text>
<text x="1425" y="252" class="m" transform="rotate(-90 1425 252)" style="font-size:11px;fill:#9fc0e0">56.61</text>
<text x="1497.700" y="252" class="m" transform="rotate(-90 1497.700 252)" style="font-size:11px;fill:#9fc0e0">58.35</text>
<text x="1541.700" y="252" class="m" transform="rotate(-90 1541.700 252)" style="font-size:11px;fill:#5f8fc0">59.22</text>
<!-- purple -->
<path d="M1179.500 235V766M1644.500 235V766" stroke="#8a1a96" stroke-width="1.3" stroke-dasharray="5 4" fill="none"/>
<text x="1174" y="751" class="m" transform="rotate(-90 1174 751)" style="font-size:11px;fill:#8a1a96">51.78</text>
<text x="1639" y="751" class="m" transform="rotate(-90 1639 751)" style="font-size:11px;fill:#8a1a96">61.20</text>
<text x="1410.700" y="754" class="m" style="font-size:11px;fill:#7f1f86">64.0%</text>
<text x="1747.300" y="754" class="m" style="font-size:11px;fill:#7f1f86">13.4%</text>
<!-- zero line -->
<path d="M1032 368.500H1851" stroke="#111" stroke-width="1.2"/>
<!-- thin curves -->
<g fill="none" stroke-width="1.2" stroke-linejoin="round">
<path stroke="#ff5a5a" d="M1032 591L1053 570Q1097 517 1122 486Q1147 455 1163.500 438.500Q1180 422 1197.500 408Q1215 394 1231.500 382Q1248 370 1269 356.500Q1290 343 1315 334Q1340 325 1357.500 321.500Q1375 318 1389 316.500Q1403 315 1416.500 315Q1430 315 1445 317.500Q1460 320 1473.500 324Q1487 328 1495.500 331Q1504 334 1525.500 343.500Q1547 353 1558.500 360.500Q1570 368 1587.500 381Q1605 394 1624 408.500Q1643 423 1670 445.500Q1697 468 1726 495Q1755 522 1777.500 541Q1800 560 1851 603"/>
<path stroke="#ff5a5a" d="M1032 563L1080 530Q1118 500 1132.500 487.500Q1147 475 1163.500 461Q1180 447 1203.500 428.500Q1227 410 1242 399Q1257 388 1272 377.500Q1287 367 1311 355Q1335 343 1361 334Q1387 325 1408.500 319.500Q1430 314 1458.500 310Q1487 306 1517 304.500Q1547 303 1571 303.500Q1595 304 1619 307Q1643 310 1670 315Q1697 320 1721 326.500Q1745 333 1763.500 340Q1782 347 1801 354Q1820 361 1851 376"/>
<polyline stroke="#ff3038" points="1032,537 1075,505 1118,473 1180,433 1227,407 1253,394"/>
<path stroke="#45c845" d="M1253 394Q1290 380 1310 374.500Q1330 369 1343 367Q1356 365 1378 363.500Q1400 362 1415 362Q1430 361.700 1440 362.600Q1450 363.500 1461.500 365.700Q1473 368 1480 370Q1487 372 1503.500 376.500Q1520 381 1533.500 385.500Q1547 390 1558 395"/>
<polyline stroke="#ff3038" points="1558,395 1600,415 1643,437 1703,473 1750,503 1800,534 1851,566"/>
<polyline stroke="#ff3038" points="1032,563 1096.700,515 1136.700,485 1180,455 1226.700,425 1283,394"/>
<path stroke="#7aa5f0" d="M1283 394Q1320 378 1338 371Q1356 364 1386.500 355.300Q1417 346.700 1423.500 345.300Q1430 344 1458.500 339.500Q1487 335 1517 333.300Q1547 331.700 1573.500 332.800Q1600 334 1621.500 336Q1643 338 1671.500 343.500Q1700 349 1740 358.500Q1780 368 1851 392.700"/>
</g>
<path d="M1358 358 1413 343V353L1358 365Z" fill="#f4a070" opacity=".6"/>
<!-- thick -->
<polyline points="1031,633.500 1238,260.500 1241.700,259 1585.300,259 1851.700,737" fill="none" stroke="#008000" stroke-width="2.200" stroke-linejoin="round"/>
<polyline points="1031,660 1238,288 1243,286.500 1851,286.500" fill="none" stroke="#4a4ac8" stroke-width="2.200" stroke-linejoin="round"/>
<circle cx="1356.300" cy="364" r="4" fill="#00e8f0" stroke="#111"/>
<!-- flags -->
<rect x="982" y="357" width="45" height="14" fill="#008000"/><text x="1024" y="365" class="e" style="font-size:12px;fill:#eaffea">1%</text>
<rect x="1856" y="357" width="47" height="14" fill="#008000"/><text x="1859" y="365" style="font-size:12px;fill:#eaffea">38</text>
<!-- legend -->
<rect x="1036.700" y="240.500" width="160" height="140" rx="5" fill="#e4ecf9" fill-opacity=".78" stroke="#66758c" stroke-width="1.2"/>
<rect x="1044" y="248" width="4" height="13" fill="#ff4040"/>
<rect x="1044" y="262" width="4" height="13" fill="#6ad86a"/><rect x="1044" y="276" width="4" height="13" fill="#6ad86a"/><rect x="1044" y="290" width="4" height="13" fill="#6ad86a"/><rect x="1044" y="304" width="4" height="13" fill="#6ad86a"/>
<rect x="1044" y="318" width="4" height="13" fill="#8fb0f0"/><rect x="1044" y="332" width="4" height="13" fill="#8fb0f0"/><rect x="1044" y="346" width="4" height="13" fill="#8fb0f0"/><rect x="1044" y="360" width="4" height="13" fill="#8fb0f0"/>
<text x="1048.700" y="255" class="lg" style="fill:#666;word-spacing:1px">-3.40 Realized PnL</text>
<g>
<text class="lg" x="1048.700" y="269" style="fill:#666">-1</text><text class="lg" x="1062.700" y="269" style="fill:#ff5a5a">14ene. 73 Call Δ</text><text class="lg e" x="1186.700" y="269" style="fill:#ff5a5a">2.14</text>
<text class="lg" x="1048.700" y="283" style="fill:#666">+1</text><text class="lg" x="1064.700" y="283" style="fill:#5a5aff">14ene. 67 Call Δ</text><text class="lg e" x="1188.700" y="283" style="fill:#5a5aff">4.80</text>
<text class="lg" x="1048.700" y="297" style="fill:#666">+1</text><text class="lg" x="1064.700" y="297" style="fill:#5a5aff">14ene. 66 Call Δ</text><text class="lg e" x="1188.700" y="297" style="fill:#5a5aff">5.65</text>
<text class="lg" x="1048.700" y="311" style="fill:#666">-1</text><text class="lg" x="1062.700" y="311" style="fill:#ff5a5a">14ene. 60 Call Δ</text><text class="lg e" x="1186.700" y="311" style="fill:#ff5a5a">19.90</text>
<text class="lg" x="1048.700" y="325" style="fill:#666">+1</text><text class="lg" x="1064.700" y="325" style="fill:#5a5aff">14ene. 47 Put Δ</text><text class="lg e" x="1185" y="325" style="fill:#5a5aff">-7.63</text>
<text class="lg" x="1048.700" y="339" style="fill:#666">+1</text><text class="lg" x="1064.700" y="339" style="fill:#5a5aff">14ene. 73 Call Δ</text><text class="lg e" x="1188.700" y="339" style="fill:#5a5aff">2.14</text>
<text class="lg" x="1048.700" y="353" style="fill:#666">-1</text><text class="lg" x="1062.700" y="353" style="fill:#ff5a5a">14ene. 67 Call Δ</text><text class="lg e" x="1186.700" y="353" style="fill:#ff5a5a">4.80</text>
<text class="lg" x="1048.700" y="367" style="fill:#666">-1</text><text class="lg" x="1062.700" y="367" style="fill:#ff5a5a">14ene. 53 Put Δ</text><text class="lg e" x="1182.700" y="367" style="fill:#ff5a5a">-29.74</text>
</g>
<!-- legend 2 -->
<rect x="1036.700" y="705.500" width="120.600" height="56" rx="5" fill="#e4ecf9" fill-opacity=".78" stroke="#66758c" stroke-width="1.2"/>
<text class="l2" x="1044.500" y="720" style="fill:#5aa05a">14/01/2026 (0)</text>
<text class="l2" x="1044.500" y="734" style="fill:#ff8080">30/12/2025 (15) T+14</text>
<text class="l2" x="1044.500" y="748" style="fill:#80e080">16/12/2025 (29) T+0</text>
<text x="1105" y="754" class="m" style="font-size:11px;fill:#7f1f86">22.5%</text>

<!-- bottom panel -->
<rect x="980.700" y="787.700" width="921" height="183.600" rx="5" fill="#e8eff7" stroke="#566070" stroke-width="1.200"/>
<g stroke="#5a5a5a" stroke-width="1.200">
<g fill="#f47a7a">
<rect x="1032.500" y="816" width="110" height="8"/><rect x="1142.500" y="816" width="99" height="3"/><rect x="1241.500" y="815.500" width="98.500" height="1"/><rect x="1340" y="815.500" width="98.500" height="1"/><rect x="1438.500" y="815.500" width="98.500" height="1"/><rect x="1537" y="816" width="99" height="2"/><rect x="1636" y="816" width="98.500" height="6"/><rect x="1734.500" y="816" width="118" height="10"/>
<rect x="1438.500" y="857.500" width="98.500" height="3"/><rect x="1537" y="857.500" width="99" height="6"/><rect x="1636" y="857.500" width="98.500" height="8"/><rect x="1734.500" y="857.500" width="118" height="9"/>
<rect x="1032.500" y="889.500" width="110" height="3"/><rect x="1142.500" y="889.500" width="99" height="7"/><rect x="1241.500" y="889.500" width="98.500" height="9"/><rect x="1340" y="889.500" width="98.500" height="10"/><rect x="1438.500" y="889.500" width="98.500" height="9"/><rect x="1537" y="889.500" width="99" height="6"/><rect x="1636" y="889.500" width="98.500" height="3"/>
<rect x="1032.500" y="921.500" width="110" height="2"/><rect x="1734.500" y="921.500" width="118" height="5"/>
<rect x="1032.500" y="953.500" width="110" height="1"/><rect x="1142.500" y="953.500" width="99" height="5"/><rect x="1241.500" y="953.500" width="98.500" height="9"/><rect x="1340" y="953.500" width="98.500" height="10"/><rect x="1438.500" y="953.500" width="98.500" height="9"/><rect x="1537" y="953.500" width="99" height="6"/><rect x="1636" y="953.500" width="98.500" height="2"/>
</g>
<g fill="#5577f5">
<rect x="1032.500" y="847.500" width="110" height="10"/><rect x="1142.500" y="849.500" width="99" height="8"/><rect x="1241.500" y="852.500" width="98.500" height="5"/><rect x="1340" y="856.500" width="98.500" height="1"/>
<rect x="1142.500" y="918.500" width="99" height="3"/><rect x="1241.500" y="913.500" width="98.500" height="8"/><rect x="1340" y="911.500" width="98.500" height="10"/><rect x="1438.500" y="912.500" width="98.500" height="9"/><rect x="1537" y="915.500" width="99" height="6"/><rect x="1636" y="920.500" width="98.500" height="1"/>
<rect x="1734.500" y="951.500" width="118" height="2"/>
</g>
<path d="M1734.500 889.500H1852.500" fill="none"/>
</g>
<!-- row labels -->
<g><text class="pl m" x="1006.700" y="816">PnL</text><text class="pl m" x="1006.700" y="858">Delta</text><text class="pl m" x="1006.700" y="890">Gamma</text><text class="pl m" x="1006.700" y="922">Theta</text><text class="pl m" x="1006.700" y="954">Vega</text>
<text class="pl m" x="1880" y="816">PnL</text><text class="pl m" x="1880" y="858">Delta</text><text class="pl m" x="1880" y="890">Gamma</text><text class="pl m" x="1880" y="922">Theta</text><text class="pl m" x="1880" y="954">Vega</text></g>
<!-- pnl -->
<g>
<text class="lr m" x="1093" y="800">-47%</text><text class="lr m" x="1093" y="811">-1403</text>
<text class="lr m" x="1191.700" y="800">-22%</text><text class="lr m" x="1191.700" y="811">-663</text>
<text class="lr m" x="1290" y="800">-5%</text><text class="lr m" x="1290" y="811">-145</text>
<text class="lb" x="1383" y="822" style="font-size:12px">72</text><text class="lb" x="1381" y="832.500" style="font-size:12px">2%</text>
<text class="lr m" x="1487" y="800">-1%</text><text class="lr m" x="1487" y="811">-35</text>
<text class="lr m" x="1586" y="800">-14%</text><text class="lr m" x="1586" y="811">-431</text>
<text class="lr m" x="1685" y="800">-34%</text><text class="lr m" x="1685" y="811">-1034</text>
<text class="lr m" x="1783.500" y="800">-58%</text><text class="lr m" x="1783.500" y="811">-1740</text>
<!-- delta -->
<text class="lb m" x="1093" y="864">406.75</text><text class="lb m" x="1191.700" y="864">322.93</text><text class="lb m" x="1290" y="864">188.01</text><text class="lb" x="1375" y="864">27.03</text>
<text class="lr m" x="1487" y="853">-130.67</text><text class="lr m" x="1586" y="853">-257.87</text><text class="lr m" x="1685" y="853">-336.29</text><text class="lr m" x="1783.500" y="853">-361.12</text>
<!-- gamma -->
<text class="lr m" x="1093" y="885">-26.13</text><text class="lr m" x="1191.700" y="885">-56.44</text><text class="lr m" x="1290" y="885">-76.34</text><text class="lr" x="1375" y="885">-82.14</text><text class="lr m" x="1487" y="885">-73.23</text><text class="lr m" x="1586" y="885">-52.41</text><text class="lr m" x="1685" y="885">-25.61</text><text class="lb m" x="1783.500" y="896">0.06</text>
<!-- theta -->
<text class="lr m" x="1093" y="917">-6.16</text><text class="lb m" x="1191.700" y="928">9.18</text><text class="lb m" x="1290" y="928">21.41</text><text class="lb" x="1375" y="928">27.33</text><text class="lb m" x="1487" y="928">25.41</text><text class="lb m" x="1586" y="928">16.18</text><text class="lb m" x="1685" y="928">2.28</text><text class="lr m" x="1783.500" y="917">-12.39</text>
<!-- vega -->
<text class="lr m" x="1093" y="949">-6.94</text><text class="lr m" x="1191.700" y="949">-31.14</text><text class="lr m" x="1290" y="949">-50.05</text><text class="lr" x="1375" y="949">-58.74</text><text class="lr m" x="1487" y="949">-54.58</text><text class="lr m" x="1586" y="949">-38.16</text><text class="lr m" x="1685" y="949">-13.71</text><text class="lb m" x="1783.500" y="960">12.22</text>
</g>
<!-- cursor box -->
<rect x="1331.700" y="771.300" width="48.600" height="200" rx="6" fill="#e8eff7" fill-opacity=".9" stroke="#4a5a6a" stroke-width="1.200"/>
<text class="c m" x="1356" y="779">55.37</text>
<g style="font-size:11px">
<text x="1356" y="812" class="m" style="font-size:11px;fill:#1a1aff">38</text><text x="1356" y="827" class="m" style="font-size:11px;fill:#1a1aff">1.3%</text>
<text x="1356" y="859" class="m" style="font-size:11px;fill:#1a1aff">78.79</text><text x="1356" y="891" class="m" style="font-size:11px;fill:#f01010">-81.94</text>
<text x="1356" y="923" class="m" style="font-size:11px;fill:#1a1aff">26.28</text><text x="1356" y="955" class="m" style="font-size:11px;fill:#f01010">-57.32</text></g>
<!-- status bar -->
<rect x="976" y="976" width="929.500" height="25" fill="#2a3a57"/>
<text x="1743" y="988" class="m" style="font-size:12.400px;fill:#f0f3f8">100%</text>
<path d="M1770 988h7M1887 988h8M1891 984v8" stroke="#dfe4ee" stroke-width="1.200"/>
<path d="M1784 988H1830" stroke="#f8ee9a" stroke-width="1.200"/><path d="M1830 988H1881" stroke="#dfe4ee"/>
<rect x="1828.500" y="983" width="3" height="10" fill="#f8ee9a"/>
</svg>
</body></html>
